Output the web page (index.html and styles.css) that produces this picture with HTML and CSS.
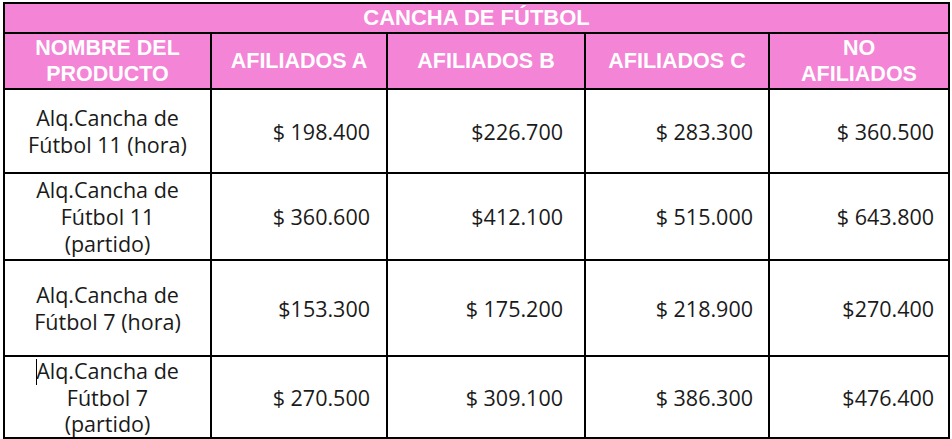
FILE: index.html
```html
<!DOCTYPE html>
<html lang="es">
<head>
<meta charset="utf-8">
<link rel="stylesheet" href="styles.css">
</head>
<body>
<div class="wrap">
<table class="prices">
  <colgroup>
    <col class="c1"><col class="c2"><col class="c3"><col class="c4"><col class="c5">
  </colgroup>
  <thead>
    <tr class="title-row"><th colspan="5">CANCHA DE FÚTBOL</th></tr>
    <tr class="head-row">
      <th>NOMBRE DEL<br>PRODUCTO</th>
      <th>AFILIADOS A</th>
      <th>AFILIADOS B</th>
      <th>AFILIADOS C</th>
      <th>NO<br>AFILIADOS</th>
    </tr>
  </thead>
  <tbody>
    <tr class="r1">
      <td class="name">Alq.Cancha de<br>Fútbol 11 (hora)</td>
      <td class="num a">$ 198.400</td>
      <td class="num b">$226.700</td>
      <td class="num c">$ 283.300</td>
      <td class="num d">$ 360.500</td>
    </tr>
    <tr class="r2">
      <td class="name">Alq.Cancha de<br>Fútbol 11<br>(partido)</td>
      <td class="num a">$ 360.600</td>
      <td class="num b">$412.100</td>
      <td class="num c">$ 515.000</td>
      <td class="num d">$ 643.800</td>
    </tr>
    <tr class="r3">
      <td class="name">Alq.Cancha de<br>Fútbol 7 (hora)</td>
      <td class="num a">$153.300</td>
      <td class="num b">$ 175.200</td>
      <td class="num c">$ 218.900</td>
      <td class="num d">$270.400</td>
    </tr>
    <tr class="r4">
      <td class="name"><span class="caret"></span>Alq.Cancha de<br>Fútbol 7<br>(partido)</td>
      <td class="num a">$ 270.500</td>
      <td class="num b">$ 309.100</td>
      <td class="num c">$ 386.300</td>
      <td class="num d">$476.400</td>
    </tr>
  </tbody>
</table>
</div>
</body>
</html>
```
FILE: styles.css
```css
html, body {
  margin: 0;
  padding: 0;
  background: #ffffff;
}
.wrap {
  padding: 2px 0 0 3px;
}
.prices {
  border-collapse: collapse;
  table-layout: fixed;
  width: 945px;
  font-family: "Open Sans", "Liberation Sans", sans-serif;
  color: #1a1a1a;
}
.c1 { width: 207px; }
.c2 { width: 176px; }
.c3 { width: 198px; }
.c4 { width: 184px; }
.c5 { width: 180px; }
.prices th, .prices td {
  border: 2px solid #000;
  padding: 0;
  vertical-align: middle;
}
.prices th {
  background: #f384d6;
  color: #ffffff;
  font-family: "Liberation Sans", Arial, sans-serif;
  font-weight: bold;
  font-size: 21.5px;
  line-height: 26px;
  text-align: center;
}
.title-row { height: 30px; }
.title-row th { font-size: 22px; line-height: 24px; }
.head-row { height: 56px; }
.r1 { height: 84px; }
.r2 { height: 87px; }
.r3 { height: 96px; }
.r4 { height: 82px; }
.prices td {
  font-size: 21.5px;
  line-height: 27px;
}
.r4 .name {
  line-height: 26px;
}
.name {
  text-align: center;
}
.num {
  text-align: right;
}
.num.a { padding-right: 16px; }
.num.b { padding-right: 21px; }
.num.c { padding-right: 15px; }
.num.d { padding-right: 14px; }
.caret {
  display: inline-block;
  width: 0;
  height: 26px;
  border-left: 1px solid #000;
  vertical-align: -6px;
  margin-right: -1px;
}
```
